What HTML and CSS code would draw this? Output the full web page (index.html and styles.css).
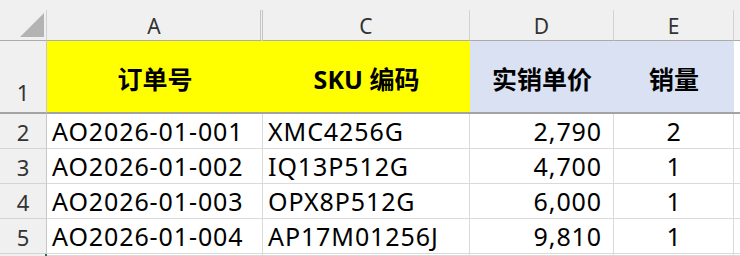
FILE: index.html
```html
<!DOCTYPE html>
<html lang="zh-CN">
<head>
<meta charset="utf-8">
<title>Sheet</title>
<link rel="stylesheet" href="styles.css">
</head>
<body>
<div class="sheet">
  <div class="topbar"></div>
  <div class="grid">
    <div class="corner"><svg class="tri" width="24" height="24" viewBox="0 0 24 24"><polygon points="24,0 24,24 0,24" fill="#b3b3b3"/></svg></div>
    <div class="colhead hidden-after">A</div>
    <div class="colhead">C</div>
    <div class="colhead">D</div>
    <div class="colhead">E</div>
    <div class="colhead rest"></div>

    <div class="rowhead r1">1</div>
    <div class="hcell yellow">订单号</div>
    <div class="hcell yellow">SKU 编码</div>
    <div class="hcell blue">实销单价</div>
    <div class="hcell blue">销量</div>
    <div class="hcell rest"></div>

    <div class="rowhead">2</div>
    <div class="cell">AO2026-01-001</div>
    <div class="cell">XMC4256G</div>
    <div class="cell num">2,790</div>
    <div class="cell ctr">2</div>
    <div class="cell rest"></div>

    <div class="rowhead">3</div>
    <div class="cell">AO2026-01-002</div>
    <div class="cell">IQ13P512G</div>
    <div class="cell num">4,700</div>
    <div class="cell ctr">1</div>
    <div class="cell rest"></div>

    <div class="rowhead">4</div>
    <div class="cell">AO2026-01-003</div>
    <div class="cell">OPX8P512G</div>
    <div class="cell num">6,000</div>
    <div class="cell ctr">1</div>
    <div class="cell rest"></div>

    <div class="rowhead">5</div>
    <div class="cell">AO2026-01-004</div>
    <div class="cell">AP17M01256J</div>
    <div class="cell num">9,810</div>
    <div class="cell ctr">1</div>
    <div class="cell rest"></div>

    <div class="rowhead r6"></div>
    <div class="cell"></div>
    <div class="cell"></div>
    <div class="cell"></div>
    <div class="cell"></div>
    <div class="cell rest"></div>
  </div>
</div>
</body>
</html>
```
FILE: styles.css
```css
* { box-sizing: border-box; }
html, body {
  margin: 0;
  padding: 0;
  background: #ffffff;
}
body {
  width: 740px;
  height: 256px;
  overflow: hidden;
  font-family: "Noto Sans", "Noto Sans CJK SC", sans-serif;
}
.sheet {
  display: flex;
  flex-direction: column;
  height: 256px;
}
.topbar {
  height: 10px;
  background: #f0f0f0;
  flex: none;
}
.grid {
  flex: 1;
  display: grid;
  grid-template-columns: 47px 216px 207px 144px 120px 1fr;
  grid-template-rows: 31px 73px 35px 35px 35px 35px 1fr;
}
.corner {
  background: #f0f0f0;
  border-right: 1px solid #d2d2d2;
  border-bottom: 1px solid #ababab;
  display: flex;
  justify-content: flex-end;
  align-items: flex-end;
  padding: 0 2px 3px 0;
}
.tri { display: block; }
.colhead {
  background: #f0f0f0;
  border-right: 1px solid #d2d2d2;
  border-bottom: 1px solid #ababab;
  color: #333333;
  font-size: 21px;
  line-height: 30px;
  padding-top: 1px;
  text-align: center;
}
.colhead.hidden-after {
  border-right: 3px double #c4c4c4;
  padding-left: 1px;
}
.colhead.rest { border-right: none; }
.rowhead {
  background: #f0f0f0;
  border-right: 1px solid #c8c8c8;
  border-bottom: 1px solid #d4d4d4;
  color: #333333;
  font-size: 22px;
  line-height: 34px;
  padding-top: 1px;
  text-align: center;
}
.rowhead.r1 {
  border-bottom: 2px solid #a3a3a3;
  display: flex;
  align-items: flex-end;
  justify-content: center;
  padding-bottom: 3px;
}
.rowhead.r6 {
  border-bottom: none;
  border-right: 2px solid #217346;
}
.hcell {
  border-bottom: 2px solid #a3a3a3;
  display: flex;
  align-items: center;
  justify-content: center;
  font-family: "Noto Sans", "Noto Sans CJK SC", sans-serif;
  font-weight: 700;
  font-size: 25px;
  color: #000000;
  padding-top: 2px;
}
.hcell.yellow { background: #ffff00; }
.hcell.blue { background: #d9e1f2; }
.hcell.rest { background: #ffffff; }
.cell {
  border-right: 1px solid #dadada;
  border-bottom: 1px solid #dadada;
  font-size: 25px;
  letter-spacing: 0.9px;
  line-height: 34px;
  color: #000000;
  padding: 0 4px 0 5px;
  white-space: nowrap;
  overflow: hidden;
}
.cell.num {
  text-align: right;
  padding-right: 11px;
}
.cell.ctr { text-align: center; }
.cell.rest { border-right: none; }
```
